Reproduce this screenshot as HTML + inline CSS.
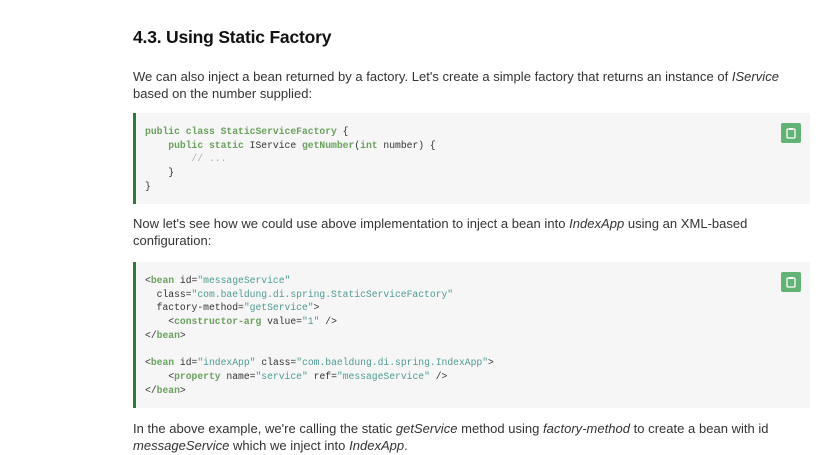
<!DOCTYPE html>
<html><head><meta charset="utf-8"><style>
body{margin:0;background:#fff;width:821px;height:455px;overflow:hidden;font-family:"Liberation Sans",sans-serif;color:#222;}
.h{position:absolute;left:133px;top:27px;font-size:17.5px;font-weight:bold;color:#111;letter-spacing:-0.2px}
.p{position:absolute;left:133px;font-size:13px;line-height:17px;white-space:nowrap;color:#333;letter-spacing:0.02px}
.code{position:absolute;left:133px;width:677px;background:#f6f6f6;border-left:3px solid #2f7a3a;box-sizing:border-box}
pre{margin:0;position:absolute;left:9px;font-family:"Liberation Mono",monospace;font-size:9.7px;line-height:13.7px;color:#333}
.k{color:#6aa15e;font-weight:bold}
.s{color:#4f9a96}
.c{color:#aaa}
.btn{position:absolute;right:9px;top:10px;width:20px;height:20px;background:#63b276;border-radius:2px}
</style></head><body>
<div class="h">4.3. Using Static Factory</div>
<div class="p" style="top:68px">We can also inject a bean returned by a factory. Let's create a simple factory that returns an instance of <i>IService</i><br>based on the number supplied:</div>
<div class="code" style="top:113px;height:91px">
<pre style="top:12px"><span class="k">public class StaticServiceFactory</span> {
    <span class="k">public static</span> IService <span class="k">getNumber</span>(<span class="k">int</span> number) {
        <span class="c">// ...</span>
    }
}</pre>
<div class="btn"><svg width="20" height="20" viewBox="0 0 20 20"><rect x="6" y="6" width="8" height="9" rx="1" fill="none" stroke="#fff" stroke-width="1.3"/><rect x="8" y="5" width="4" height="2" fill="#fff"/></svg></div>
</div>
<div class="p" style="top:215px">Now let's see how we could use above implementation to inject a bean into <i>IndexApp</i> using an XML-based<br>configuration:</div>
<div class="code" style="top:262px;height:146px">
<pre style="top:12px">&lt;<span class="k">bean</span> id=<span class="s">"messageService"</span>
  class=<span class="s">"com.baeldung.di.spring.StaticServiceFactory"</span>
  factory-method=<span class="s">"getService"</span>&gt;
    &lt;<span class="k">constructor-arg</span> value=<span class="s">"1"</span> /&gt;
&lt;/<span class="k">bean</span>&gt;

&lt;<span class="k">bean</span> id=<span class="s">"indexApp"</span> class=<span class="s">"com.baeldung.di.spring.IndexApp"</span>&gt;
    &lt;<span class="k">property</span> name=<span class="s">"service"</span> ref=<span class="s">"messageService"</span> /&gt;
&lt;/<span class="k">bean</span>&gt;</pre>
<div class="btn"><svg width="20" height="20" viewBox="0 0 20 20"><rect x="6" y="6" width="8" height="9" rx="1" fill="none" stroke="#fff" stroke-width="1.3"/><rect x="8" y="5" width="4" height="2" fill="#fff"/></svg></div>
</div>
<div class="p" style="top:420px">In the above example, we're calling the static <i>getService</i> method using <i>factory-method</i> to create a bean with id<br><i>messageService</i> which we inject into <i>IndexApp</i>.</div>
</body></html>
